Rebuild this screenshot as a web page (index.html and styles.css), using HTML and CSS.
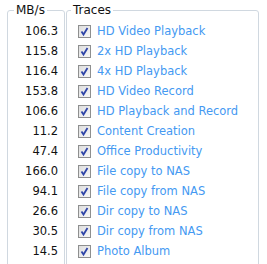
FILE: index.html
```html
<!DOCTYPE html>
<html lang="en">

<head>
    <meta charset="UTF-8">
    <title>Traces</title>
    <link rel="stylesheet" href="styles.css">
</head>

<body>
    <div class="panel">
        <fieldset class="box box-speed">
            <legend>MB/s</legend>
            <ul class="values">
                <li>106.3</li>
                <li>115.8</li>
                <li>116.4</li>
                <li>153.8</li>
                <li>106.6</li>
                <li>11.2</li>
                <li>47.4</li>
                <li>166.0</li>
                <li>94.1</li>
                <li>26.6</li>
                <li>30.5</li>
                <li>14.5</li>
            </ul>
        </fieldset>

        <fieldset class="box box-traces">
            <legend>Traces</legend>
            <ul class="traces">
                <li><span class="check"><svg viewBox="0 0 11 11"><path d="M2.5 5.5 L4.5 8.5 L8.5 2" /></svg></span>HD Video Playback</li>
                <li><span class="check"><svg viewBox="0 0 11 11"><path d="M2.5 5.5 L4.5 8.5 L8.5 2" /></svg></span>2x HD Playback</li>
                <li><span class="check"><svg viewBox="0 0 11 11"><path d="M2.5 5.5 L4.5 8.5 L8.5 2" /></svg></span>4x HD Playback</li>
                <li><span class="check"><svg viewBox="0 0 11 11"><path d="M2.5 5.5 L4.5 8.5 L8.5 2" /></svg></span>HD Video Record</li>
                <li><span class="check"><svg viewBox="0 0 11 11"><path d="M2.5 5.5 L4.5 8.5 L8.5 2" /></svg></span>HD Playback and Record</li>
                <li><span class="check"><svg viewBox="0 0 11 11"><path d="M2.5 5.5 L4.5 8.5 L8.5 2" /></svg></span>Content Creation</li>
                <li><span class="check"><svg viewBox="0 0 11 11"><path d="M2.5 5.5 L4.5 8.5 L8.5 2" /></svg></span>Office Productivity</li>
                <li><span class="check"><svg viewBox="0 0 11 11"><path d="M2.5 5.5 L4.5 8.5 L8.5 2" /></svg></span>File copy to NAS</li>
                <li><span class="check"><svg viewBox="0 0 11 11"><path d="M2.5 5.5 L4.5 8.5 L8.5 2" /></svg></span>File copy from NAS</li>
                <li><span class="check"><svg viewBox="0 0 11 11"><path d="M2.5 5.5 L4.5 8.5 L8.5 2" /></svg></span>Dir copy to NAS</li>
                <li><span class="check"><svg viewBox="0 0 11 11"><path d="M2.5 5.5 L4.5 8.5 L8.5 2" /></svg></span>Dir copy from NAS</li>
                <li><span class="check"><svg viewBox="0 0 11 11"><path d="M2.5 5.5 L4.5 8.5 L8.5 2" /></svg></span>Photo Album</li>
            </ul>
        </fieldset>
    </div>
</body>

</html>
```

FILE: styles.css
```css
html,
body {
    margin: 0;
    padding: 0;
    height: 100%;
    overflow: hidden;
    background-color: #fff;
}

body {
    font-family: "DejaVu Sans", Verdana, sans-serif;
    font-size: 11.5px;
    color: #111;
}

.panel {
    display: flex;
    gap: 1px;
    padding-left: 7px;
}

.box {
    margin: 0;
    padding: 0 0 40px 0;
    border: 1px solid #d0d8e0;
    border-radius: 3px;
    min-height: 300px;
}

.box legend {
    font-size: 12px;
    line-height: 20px;
    padding: 0 2px;
}

.box-speed {
    width: 58px;
    box-sizing: border-box;
}

.box-speed legend {
    margin-left: 6px;
}

.box-traces {
    width: 193px;
    box-sizing: border-box;
}

.box-traces legend {
    margin-left: 4px;
}

ul {
    list-style: none;
    margin: 0;
    padding: 0;
}

li {
    height: 20px;
    line-height: 20px;
    white-space: nowrap;
}

.values {
    text-align: right;
    padding-right: 6px;
    margin-top: 1px;
}

.traces {
    padding-left: 11px;
    margin-top: 1px;
    color: #4499f2;
}

.traces li {
    display: flex;
    align-items: center;
    gap: 6px;
}

/* checked box drawn by hand */
.check {
    width: 11px;
    height: 11px;
    border: 1px solid #8e8f8f;
    background: linear-gradient(135deg, #dedede, #f8f8f8);
    flex: none;
    display: flex;
}

.check svg {
    width: 11px;
    height: 11px;
    fill: none;
    stroke: #2f45a8;
    stroke-width: 1.8;
}
```
